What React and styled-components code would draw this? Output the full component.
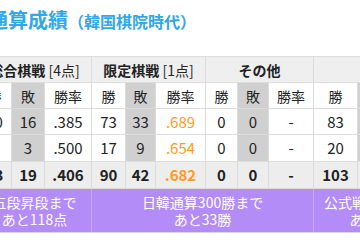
import React from "react";
import styled, { createGlobalStyle } from "styled-components";

const Global = createGlobalStyle`
  html, body { margin: 0; padding: 0; background: #fff; overflow: hidden; }
  body { font-family: "Noto Sans CJK JP", "Noto Sans", sans-serif; color: #222; }
`;

const Page = styled.div`
  width: 360px;
  height: 240px;
  overflow: hidden;
`;

const Title = styled.h2`
  margin: 0 0 0 -12px;
  height: 56px;
  padding-top: 7px;
  box-sizing: border-box;
  line-height: 26px;
  font-size: 20px;
  font-weight: 700;
  color: #30a8ea;
  white-space: nowrap;
`;

const Sub = styled.span`
  font-size: 16px;
`;

const Table = styled.table`
  margin-left: -23px;
  border-collapse: collapse;
  table-layout: fixed;
  width: 464px;
  border-top: 1px solid #d4d4d4;
`;

const Row = styled.tr`
  height: ${(p) => p.$h || 26}px;
`;

const Cell = styled.td`
  padding: 0;
  text-align: center;
  vertical-align: middle;
  border: 1px solid #dcdcdc;
  font-size: ${(p) => (p.$head ? "14px" : "15px")};
  line-height: 18px;
  font-weight: ${(p) => (p.$bold ? 700 : 400)};
  background: ${(p) => p.$bg || "#fff"};
  color: ${(p) => (p.$rate ? "#ff9a1e" : "#222")};
  white-space: nowrap;
  overflow: hidden;
`;

const GroupCell = styled(Cell)`
  background: #efefef;
  font-size: 14px;
`;

const GroupName = styled.b`
  font-weight: 700;
`;

const FootCell = styled.td`
  padding: 0;
  background: #b38cf8;
  color: #fff;
  text-align: center;
  vertical-align: middle;
  font-size: 14px;
  line-height: 17px;
  border: 1px solid #c7adf7;
  border-bottom: 1px solid #d8d8d8;
  white-space: nowrap;
  overflow: hidden;
`;

const widths = [34, 33, 47, 34, 30, 50, 32, 31, 45, 44, 34, 50];
const GRAY = "#d0d0d0";
const LIGHT = "#ededed";

const groups = [
  { name: "総合棋戦", pts: "[4点]" },
  { name: "限定棋戦", pts: "[1点]" },
  { name: "その他" },
  { name: "合計" },
];

const rows = [
  ["10", "16", ".385", "73", "33", ".689", "0", "0", "-", "83", "49", ".629"],
  ["3", "3", ".500", "17", "9", ".654", "0", "0", "-", "20", "12", ".625"],
];
const total = ["13", "19", ".406", "90", "42", ".682", "0", "0", "-", "103", "61", ".628"];

function DataRow({ cells, isTotal, h }) {
  return (
    <Row $h={h}>
      {cells.map((v, i) => {
        const lose = i % 3 === 1;
        const bg = isTotal ? LIGHT : lose ? GRAY : "#fff";
        return (
          <Cell key={i} $bg={bg} $bold={isTotal} $rate={i === 5}>
            {v}
          </Cell>
        );
      })}
    </Row>
  );
}

export default function App() {
  return (
    <Page>
      <Global />
      <Title>
        通算成績<Sub>（韓国棋院時代）</Sub>
      </Title>
      <Table>
        <colgroup>
          {widths.map((w, i) => (
            <col key={i} style={{ width: w }} />
          ))}
        </colgroup>
        <tbody>
          <Row $h={26}>
            {groups.map((g) => (
              <GroupCell key={g.name} colSpan={3}>
                <GroupName>{g.name}</GroupName>
                {g.pts ? ` ${g.pts}` : ""}
              </GroupCell>
            ))}
          </Row>
          <Row $h={26}>
            {widths.map((_, i) => (
              <Cell key={i} $head $bg={i % 3 === 1 ? GRAY : "#fff"}>
                {["勝", "敗", "勝率"][i % 3]}
              </Cell>
            ))}
          </Row>
          {rows.map((r, i) => (
            <DataRow key={i} cells={r} h={i === 0 ? 26 : 27} />
          ))}
          <DataRow cells={total} isTotal h={27} />
          <Row $h={44}>
            <FootCell colSpan={3}>
              五段昇段まで
              <br />
              あと118点
            </FootCell>
            <FootCell colSpan={6}>
              日韓通算300勝まで
              <br />
              あと33勝
            </FootCell>
            <FootCell colSpan={3}>
              公式戦100勝まで
              <br />
              あと達成
            </FootCell>
          </Row>
        </tbody>
      </Table>
    </Page>
  );
}
